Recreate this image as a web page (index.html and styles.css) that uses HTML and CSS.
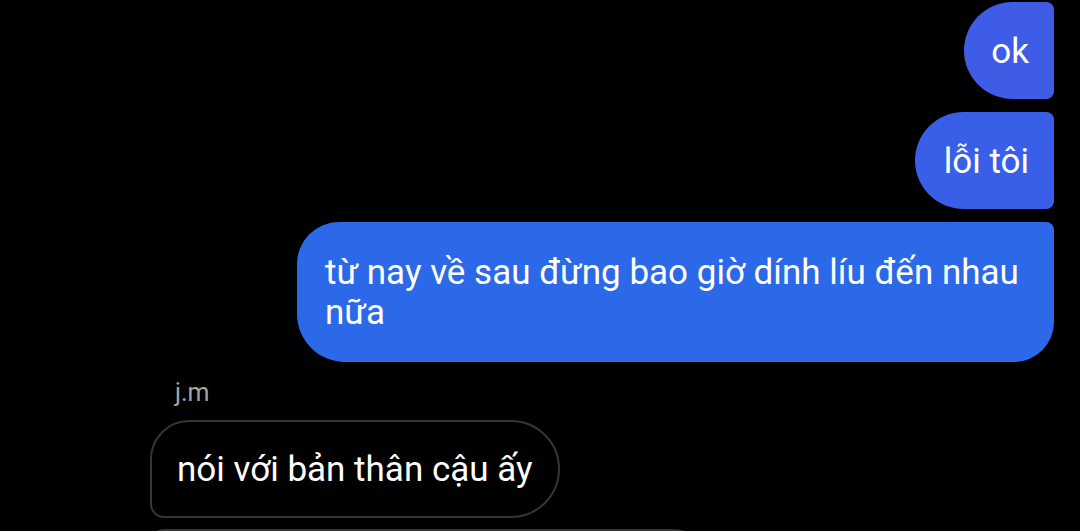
FILE: index.html
```html
<!DOCTYPE html>
<html lang="vi">
<head>
<meta charset="utf-8">
<link rel="stylesheet" href="styles.css">
</head>
<body>
<div class="chat">
  <div class="group sent">
    <div class="bubble sent-first c1">ok</div>
    <div class="bubble sent-mid c2">lỗi tôi</div>
    <div class="bubble sent-last c3">từ nay về sau đừng bao giờ dính líu đến nhau nữa</div>
  </div>
  <div class="group received">
    <div class="sender">j.m</div>
    <div class="bubble recv recv-first">nói với bản thân cậu ấy</div>
    <div class="bubble recv recv-next">&nbsp;</div>
  </div>
</div>
</body>
</html>
```

FILE: styles.css
```css
html, body {
  margin: 0;
  padding: 0;
  background: #000;
  height: 100%;
  overflow: hidden;
}
.chat {
  display: flex;
  flex-direction: column;
  padding: 2px 26px 0 150px;
  font-family: Roboto, "Noto Sans", sans-serif;
}
.group {
  display: flex;
  flex-direction: column;
  gap: 13px;
}
.sent {
  align-items: flex-end;
}
.received {
  align-items: flex-start;
  margin-top: 16px;
  gap: 0;
}
.bubble {
  font-size: 35px;
  line-height: 40px;
  color: #fff;
  padding: 30px 25px 27px 27px;
  box-sizing: border-box;
  max-width: 757px;
}
.c1 { background: #3f5ce6; }
.c2 { background: #395fe8; }
.c3 { background: #2c69e8; }
.sent-first {
  border-radius: 50px 8px 8px 50px;
}
.sent-mid {
  border-radius: 50px 8px 8px 50px;
  padding-left: 29px;
}
.sent-last {
  border-radius: 42px 8px 40px 48px;
  padding: 31px 28px 29px 28px;
}
.sender {
  color: #a5a5a5;
  font-size: 25px;
  line-height: 30px;
  padding-left: 25px;
  margin-bottom: 12px;
}
.recv {
  border: 2px solid #363636;
  background: #000;
  padding: 28px 25px 26px;
}
.recv-first {
  border-radius: 40px 50px 50px 14px;
}
.recv-next {
  margin-top: 11px;
  width: 570px;
  border-radius: 14px 50px 50px 14px;
}
```
